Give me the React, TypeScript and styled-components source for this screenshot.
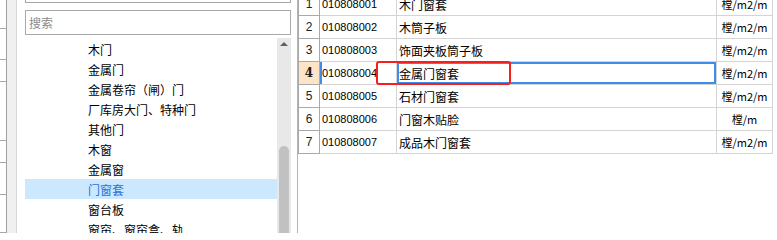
import React from "react";
import styled, { createGlobalStyle } from "styled-components";

const GlobalStyle = createGlobalStyle`
  html, body {
    margin: 0;
    padding: 0;
    background: #ffffff;
    overflow: hidden;
  }
  * {
    box-sizing: border-box;
  }
`;

const CJK = `"Noto Sans CJK SC", "Microsoft YaHei", sans-serif`;

const Screen = styled.div`
  display: flex;
  flex-direction: row;
  width: 777px;
  height: 233px;
  overflow: hidden;
  background: #ffffff;
  font-family: ${CJK};
`;

const EdgeGrid = styled.div`
  width: 6px;
  display: flex;
  flex-direction: column;
  flex-shrink: 0;
`;

const EdgeCell = styled.div<{ $h: number }>`
  height: ${(p) => p.$h}px;
  border-bottom: 1px solid #a8a8a8;
`;

const Splitter = styled.div`
  width: 11px;
  flex-shrink: 0;
  background: #f0f0f0;
  border-left: 1px solid #a0a0a0;
  border-right: 1px solid #d6d6d6;
`;

const SidePanel = styled.div`
  width: 281px;
  flex-shrink: 0;
  display: flex;
  flex-direction: column;
  padding: 0 6px 0 8px;
  border-right: 1px solid #b4b4b4;
`;

const ComboBox = styled.div`
  height: 23px;
  margin-top: -20px;
  border: 1px solid #a6a6a6;
  background: #ffffff;
`;

const SearchInput = styled.div`
  height: 25px;
  margin-top: 7px;
  border: 1px solid #a9a9a9;
  padding-left: 3px;
  display: flex;
  align-items: center;
  font-size: 12px;
  color: #8c8c8c;
`;

const TreeArea = styled.div`
  flex: 1;
  margin-top: 3px;
  display: flex;
  flex-direction: row;
  min-height: 0;
`;

const TreeList = styled.div`
  flex: 1;
  padding-top: 1px;
  display: flex;
  flex-direction: column;
`;

const TreeItem = styled.div<{ $selected?: boolean }>`
  height: 20px;
  flex-shrink: 0;
  line-height: 22px;
  padding-left: 63px;
  font-size: 12px;
  white-space: nowrap;
  color: ${(p) => (p.$selected ? "#2a72d4" : "#000000")};
  background: ${(p) => (p.$selected ? "#cce8ff" : "transparent")};
`;

const ScrollTrack = styled.div`
  width: 14px;
  flex-shrink: 0;
  background: #e8e8e8;
  display: flex;
  flex-direction: column;
  align-items: center;
`;

const ScrollArrow = styled.div`
  margin-top: 4px;
  width: 0;
  height: 0;
  border-left: 4px solid transparent;
  border-right: 4px solid transparent;
  border-bottom: 4px solid #606060;
`;

const ScrollThumb = styled.div`
  margin-top: 100px;
  width: 10px;
  flex: 1;
  min-height: 80px;
  border-radius: 5px 5px 0 0;
  background: #c1c1c1;
`;

const GridWrap = styled.div`
  position: relative;
  flex: 1;
`;

const Grid = styled.table`
  border-collapse: collapse;
  margin-top: -8px;
  table-layout: fixed;
`;

const Row = styled.tr`
  height: 23px;
`;

const NumCell = styled.td<{ $active?: boolean }>`
  width: 21px;
  padding: 0;
  text-align: center;
  border: 1px solid #a9a9a9;
  font-family: ${(p) => (p.$active ? `"DejaVu Serif", serif` : `"Liberation Sans", sans-serif`)};
  font-weight: ${(p) => (p.$active ? 700 : 400)};
  font-size: 12px;
  color: #222222;
  background: ${(p) => (p.$active ? "#fde4c6" : "#ffffff")};
`;

const CodeCell = styled.td<{ $active?: boolean }>`
  width: 77px;
  padding: 0 0 0 2px;
  border: 1px solid #d4d4d4;
  border-left-color: #a9a9a9;
  font-family: "Liberation Sans", sans-serif;
  font-size: 11px;
  color: #000000;
  white-space: nowrap;
  box-shadow: ${(p) => (p.$active ? "inset 2px 0 0 #3d8de9" : "none")};
`;

const NameCell = styled.td<{ $active?: boolean }>`
  width: 320px;
  padding: 0 0 0 2px;
  border: 1px solid #d4d4d4;
  font-size: 12px;
  color: #000000;
  white-space: nowrap;
  box-shadow: ${(p) => (p.$active ? "inset 0 0 0 2px #3d8de9" : "none")};
`;

const UnitCell = styled.td`
  width: 56px;
  padding: 0;
  text-align: center;
  border: 1px solid #d4d4d4;
  font-size: 11px;
  color: #000000;
  white-space: nowrap;
`;

const Highlight = styled.div`
  position: absolute;
  left: 78px;
  top: 61px;
  width: 135px;
  height: 24px;
  border: 2px solid #f42020;
  border-radius: 3px;
  pointer-events: none;
`;

const edgeHeights = [30, 33, 23, 61, 23, 33, 40];

const treeItems = [
  "木门",
  "金属门",
  "金属卷帘（闸）门",
  "厂库房大门、特种门",
  "其他门",
  "木窗",
  "金属窗",
  "门窗套",
  "窗台板",
  "窗帘、窗帘盒、轨",
];

type Item = { no: number; code: string; name: string; unit: string };

const rows: Item[] = [
  { no: 1, code: "010808001", name: "木门窗套", unit: "樘/m2/m" },
  { no: 2, code: "010808002", name: "木筒子板", unit: "樘/m2/m" },
  { no: 3, code: "010808003", name: "饰面夹板筒子板", unit: "樘/m2/m" },
  { no: 4, code: "010808004", name: "金属门窗套", unit: "樘/m2/m" },
  { no: 5, code: "010808005", name: "石材门窗套", unit: "樘/m2/m" },
  { no: 6, code: "010808006", name: "门窗木贴脸", unit: "樘/m" },
  { no: 7, code: "010808007", name: "成品木门窗套", unit: "樘/m2/m" },
];

const activeRow = 4;

const App = () => {
  return (
    <>
      <GlobalStyle />
      <Screen>
        <EdgeGrid>
          {edgeHeights.map((h, i) => (
            <EdgeCell key={i} $h={h} />
          ))}
        </EdgeGrid>
        <Splitter />
        <SidePanel>
          <ComboBox />
          <SearchInput>搜索</SearchInput>
          <TreeArea>
            <TreeList>
              {treeItems.map((t) => (
                <TreeItem key={t} $selected={t === "门窗套"}>
                  {t}
                </TreeItem>
              ))}
            </TreeList>
            <ScrollTrack>
              <ScrollArrow />
              <ScrollThumb />
            </ScrollTrack>
          </TreeArea>
        </SidePanel>
        <GridWrap>
          <Grid>
            <tbody>
              {rows.map((r) => {
                const active = r.no === activeRow;
                return (
                  <Row key={r.no}>
                    <NumCell $active={active}>{r.no}</NumCell>
                    <CodeCell $active={active}>{r.code}</CodeCell>
                    <NameCell $active={active}>{r.name}</NameCell>
                    <UnitCell>{r.unit}</UnitCell>
                  </Row>
                );
              })}
            </tbody>
          </Grid>
          <Highlight />
        </GridWrap>
      </Screen>
    </>
  );
};

export default App;
